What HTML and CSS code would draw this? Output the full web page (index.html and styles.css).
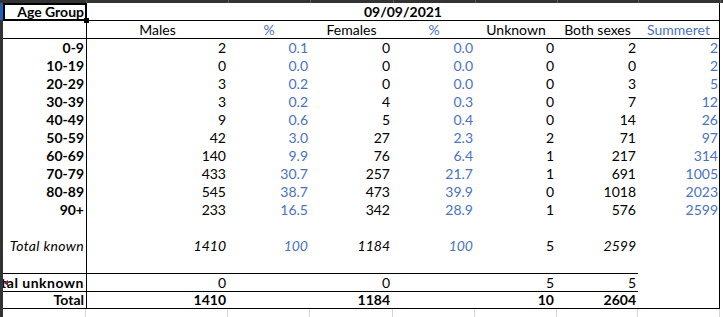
FILE: index.html
```html
<!DOCTYPE html>
<html>
<head>
<meta charset="utf-8">
<link rel="stylesheet" href="styles.css">
</head>
<body>
<div class="app">
  <div class="corner"></div>
  <div class="colbar">
    <div class="cb w1"></div><div class="cb w2"></div><div class="cb w3"></div><div class="cb w4"></div>
    <div class="cb w5"></div><div class="cb w6"></div><div class="cb w7"></div><div class="cb w8"></div>
  </div>
  <div class="rowbar">
    <div class="rb sel"></div>
    <div class="rb"></div>
  </div>
  <div class="main">
    <div class="sheet">
      <!-- row 1 -->
      <div class="c b selcell">Age Group<span class="handle"></span></div>
      <div class="c b ctr span bl br">09/09/2021</div>
      <!-- row 2 -->
      <div class="c bt"></div>
      <div class="c ctr bt bl">Males</div>
      <div class="c ctr bt blue">%</div>
      <div class="c ctr bt">Females</div>
      <div class="c ctr bt blue">%</div>
      <div class="c ctr bt">Unknown</div>
      <div class="c ctr bt">Both sexes</div>
      <div class="c ctr bt br blue">Summeret</div>
      <!-- data rows -->
      <div class="c b bt">0-9</div><div class="c bt bl">2</div><div class="c bt blue">0.1</div><div class="c bt p3">0</div><div class="c bt blue">0.0</div><div class="c bt p3">0</div><div class="c bt">2</div><div class="c bt br blue p1">2</div>
      <div class="c b">10-19</div><div class="c bl">0</div><div class="c blue">0.0</div><div class="c p3">0</div><div class="c blue">0.0</div><div class="c p3">0</div><div class="c">0</div><div class="c br blue p1">2</div>
      <div class="c b">20-29</div><div class="c bl">3</div><div class="c blue">0.2</div><div class="c p3">0</div><div class="c blue">0.0</div><div class="c p3">0</div><div class="c">3</div><div class="c br blue p1">5</div>
      <div class="c b">30-39</div><div class="c bl">3</div><div class="c blue">0.2</div><div class="c p3">4</div><div class="c blue">0.3</div><div class="c p3">0</div><div class="c">7</div><div class="c br blue p1">12</div>
      <div class="c b">40-49</div><div class="c bl">9</div><div class="c blue">0.6</div><div class="c p3">5</div><div class="c blue">0.4</div><div class="c p3">0</div><div class="c">14</div><div class="c br blue p1">26</div>
      <div class="c b">50-59</div><div class="c bl">42</div><div class="c blue">3.0</div><div class="c p3">27</div><div class="c blue">2.3</div><div class="c p3">2</div><div class="c">71</div><div class="c br blue p1">97</div>
      <div class="c b">60-69</div><div class="c bl">140</div><div class="c blue">9.9</div><div class="c p3">76</div><div class="c blue">6.4</div><div class="c p3">1</div><div class="c">217</div><div class="c br blue p1">314</div>
      <div class="c b">70-79</div><div class="c bl">433</div><div class="c blue">30.7</div><div class="c p3">257</div><div class="c blue">21.7</div><div class="c p3">1</div><div class="c">691</div><div class="c br blue p1">1005</div>
      <div class="c b">80-89</div><div class="c bl">545</div><div class="c blue">38.7</div><div class="c p3">473</div><div class="c blue">39.9</div><div class="c p3">0</div><div class="c">1018</div><div class="c br blue p1">2023</div>
      <div class="c b">90+</div><div class="c bl">233</div><div class="c blue">16.5</div><div class="c p3">342</div><div class="c blue">28.9</div><div class="c p3">1</div><div class="c">576</div><div class="c br blue p1">2599</div>
      <!-- blank -->
      <div class="c"></div><div class="c bl"></div><div class="c"></div><div class="c"></div><div class="c"></div><div class="c"></div><div class="c"></div><div class="c br"></div>
      <!-- total known -->
      <div class="c i wide">Total known</div><div class="c i bl">1410</div><div class="c i blue">100</div><div class="c i p3">1184</div><div class="c i blue">100</div><div class="c p3">5</div><div class="c i">2599</div><div class="c br"></div>
      <!-- blank -->
      <div class="c"></div><div class="c bl"></div><div class="c"></div><div class="c"></div><div class="c"></div><div class="c"></div><div class="c"></div><div class="c br"></div>
      <!-- total unknown -->
      <div class="c b bt clip"><span class="ovf"></span>Total unknown</div><div class="c bt bl">0</div><div class="c bt"></div><div class="c bt p3">0</div><div class="c bt"></div><div class="c bt p3">5</div><div class="c bt">5</div><div class="c br"></div>
      <!-- total -->
      <div class="c b bt bb">Total</div><div class="c b bt bb bl">1410</div><div class="c bt bb"></div><div class="c b bt bb p3">1184</div><div class="c bt bb"></div><div class="c b bt bb p3">10</div><div class="c b bt bb">2604</div><div class="c bb br"></div>
    </div>
    <div class="below">
      <div class="g w1"></div><div class="g w2"></div><div class="g w3"></div><div class="g w4"></div>
      <div class="g w5"></div><div class="g w6"></div><div class="g w7"></div><div class="g w8"></div>
    </div>
  </div>
</div>
</body>
</html>
```

FILE: styles.css
```css
* { box-sizing: border-box; }
html, body { margin: 0; padding: 0; background: #ffffff; }
body {
  width: 723px;
  height: 317px;
  overflow: hidden;
  font-family: "Lato", "Open Sans", sans-serif;
  font-size: 14px;
  color: #000;
}
.app {
  display: grid;
  grid-template-columns: 3px 720px;
  grid-template-rows: 3px 314px;
}
.corner { background: #333333; }
.colbar { display: flex; background: #333333; }
.cb { border-right: 1px solid #5a5a5a; flex: none; }
.w1 { width: 83px; } .w2 { width: 142px; } .w3 { width: 82px; } .w4 { width: 83px; }
.w5 { width: 82px; } .w6 { width: 82px; } .w7 { width: 81px; } .w8 { width: 82px; }
.colbar .w1 { width: 84px; }
.rowbar { background: #333333; display: flex; flex-direction: column; }
.rb.sel { height: 17px; background: #1f5fb8; }
.main { display: flex; flex-direction: column; }
.sheet {
  display: grid;
  grid-template-columns: 83px 142px 82px 83px 82px 82px 81px 82px;
  grid-template-rows: 17px 18px repeat(10, 18px) 18px 18px 19px 18px 18px;
}
.c {
  display: flex;
  align-items: flex-end;
  justify-content: flex-end;
  padding-right: 2px;
  white-space: nowrap;
  overflow: hidden;
  line-height: 17px;
  background: #fff;
}
.ctr { justify-content: center; padding-right: 0; }
.span { grid-column: 2 / 9; }
.b { font-weight: 700; }
.i { font-style: italic; }
.wide { letter-spacing: 0.35px; }
.blue { color: #4a72c2; }
.p3 { padding-right: 3px; }
.p1 { padding-right: 1px; }
.bt { border-top: 1px solid #000; }
.bb { border-bottom: 1px solid #000; }
.bl { border-left: 1px solid #000; }
.br { border-right: 1px solid #000; }
.selcell { position: relative; overflow: visible; z-index: 2; }
.selcell::before {
  content: "";
  position: absolute;
  left: 0; top: 0; right: -1px; bottom: -1px;
  border: 2px solid #000;
}
.handle {
  position: absolute;
  right: -3px;
  bottom: -3px;
  width: 5px;
  height: 5px;
  background: #000;
}
.clip { position: relative; letter-spacing: 0.5px; }
.ovf {
  position: absolute;
  left: 1px;
  top: 6px;
  width: 0; height: 0;
  border-top: 3px solid transparent;
  border-bottom: 3px solid transparent;
  border-right: 4px solid #8b1a1a;
  z-index: 1;
}
.below { display: flex; flex: 1; }
.g { border-right: 1px solid #d6d6d6; flex: none; }
```
